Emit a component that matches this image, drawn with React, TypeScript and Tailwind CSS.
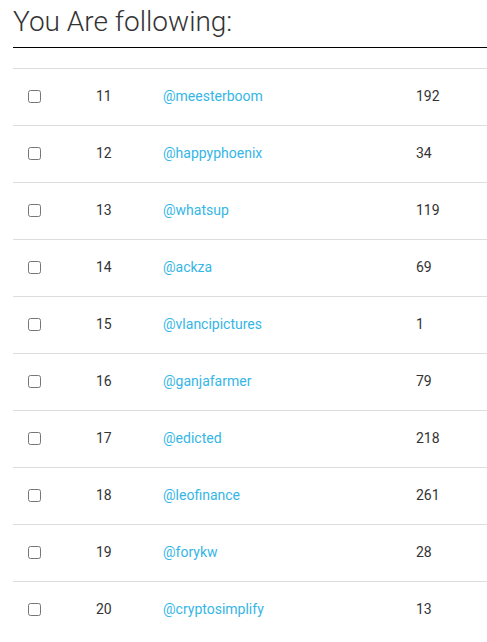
import React from 'react';

const following = [
  { id: 11, name: 'meesterboom', count: 192 },
  { id: 12, name: 'happyphoenix', count: 34 },
  { id: 13, name: 'whatsup', count: 119 },
  { id: 14, name: 'ackza', count: 69 },
  { id: 15, name: 'vlancipictures', count: 1 },
  { id: 16, name: 'ganjafarmer', count: 79 },
  { id: 17, name: 'edicted', count: 218 },
  { id: 18, name: 'leofinance', count: 261 },
  { id: 19, name: 'forykw', count: 28 },
  { id: 20, name: 'cryptosimplify', count: 13 },
];

const App = () => {
  return (
    <div className="min-h-screen bg-white pl-[13px] font-['Roboto',sans-serif]">
      <h1 className="pt-[5px] pb-[8px] text-[28px] leading-[34px] font-light text-[#333] border-b border-black">
        You Are following:
      </h1>
      <div className="mt-[20px]">
        {following.map((user) => (
          <div
            key={user.id}
            className="grid grid-cols-[68px_67px_253px_1fr] items-center h-[57px] pb-[2px] border-t border-[#dddddd] text-[14px]"
          >
            <div className="pl-[15px] flex items-center">
              <input type="checkbox" className="w-[13px] h-[13px] m-0" />
            </div>
            <div className="pl-[15px] text-[#333]">{user.id}</div>
            <div className="pl-[15px] text-[#35b6e6]">@{user.name}</div>
            <div className="pl-[15px] text-[#333]">{user.count}</div>
          </div>
        ))}
      </div>
    </div>
  );
};

export default App;
